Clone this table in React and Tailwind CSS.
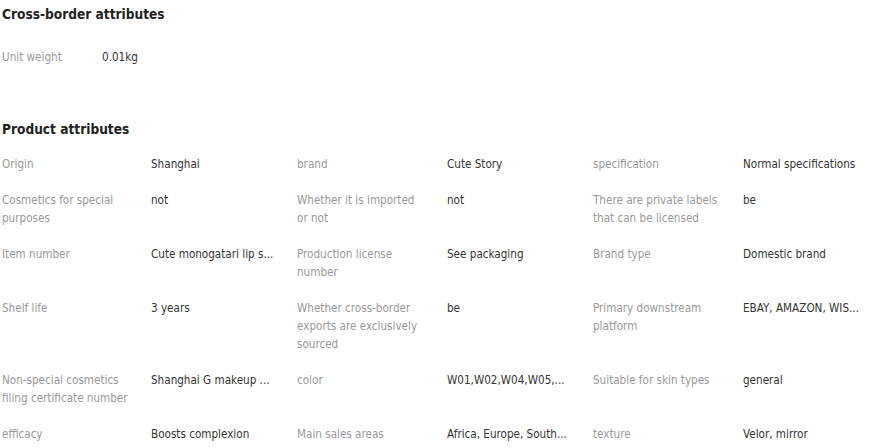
import React from "react"

const rows = [
  [
    ["Origin", "Shanghai"],
    ["brand", "Cute Story"],
    ["specification", "Normal specifications"],
  ],
  [
    ["Cosmetics for special purposes", "not"],
    ["Whether it is imported or not", "not"],
    ["There are private labels that can be licensed", "be"],
  ],
  [
    ["Item number", "Cute monogatari lip s..."],
    ["Production license number", "See packaging"],
    ["Brand type", "Domestic brand"],
  ],
  [
    ["Shelf life", "3 years"],
    ["Whether cross-border exports are exclusively sourced", "be"],
    ["Primary downstream platform", "EBAY, AMAZON, WIS..."],
  ],
  [
    ["Non-special cosmetics filing certificate number", "Shanghai G makeup ..."],
    ["color", "W01,W02,W04,W05,..."],
    ["Suitable for skin types", "general"],
  ],
  [
    ["efficacy", "Boosts complexion"],
    ["Main sales areas", "Africa, Europe, South..."],
    ["texture", "Velor, mirror"],
  ],
]

function Attr({ label, value, last }) {
  return (
    <>
      <div className="w-[149px] pr-[19px] pb-[18px] text-[#999]">{label}</div>
      <div className={last ? "min-w-0 pb-[18px] text-[#333]" : "w-[146px] pr-[10px] pb-[18px] text-[#333]"}>
        <div className="whitespace-nowrap">{value}</div>
      </div>
    </>
  )
}

export default function App() {
  return (
    <div
      className="bg-white pl-[2px] text-[11.6px] leading-[18px] text-[#333]"
      style={{ fontFamily: "'DejaVu Sans Condensed', 'Liberation Sans', sans-serif" }}
    >
      <h3 className="text-[13.6px] font-bold leading-[28px] text-[#222]">Cross-border attributes</h3>
      <div className="mt-[20px] flex">
        <div className="w-[100px] text-[#999]">Unit weight</div>
        <div className="text-[#333]">0.01kg</div>
      </div>
      <h3 className="mt-[49px] text-[13.6px] font-bold leading-[28px] text-[#222]">Product attributes</h3>
      <div className="mt-[12px] grid grid-cols-[149px_146px_150px_146px_150px_1fr]">
        {rows.map((r, i) =>
          r.map(([label, value], j) => (
            <Attr key={i + "-" + j} label={label} value={value} last={j === 2} />
          ))
        )}
      </div>
    </div>
  )
}
